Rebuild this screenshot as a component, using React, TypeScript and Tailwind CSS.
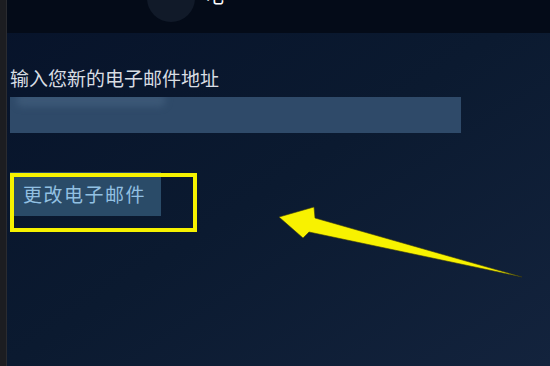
import React from "react";

const cjk = { fontFamily: '"Noto Sans CJK SC", "Noto Sans", sans-serif' };

function Arrow() {
  return (
    <svg
      className="absolute inset-0 pointer-events-none"
      width={550}
      height={366}
      viewBox="0 0 550 366"
    >
      <polygon
        points="279,217 314,207 315,218 522,277 309,232 303,238"
        fill="#f8f200"
        stroke="#3a3a10"
        strokeWidth={0.6}
        strokeLinejoin="round"
      />
    </svg>
  );
}

export default function App() {
  return (
    <div
      className="relative w-[550px] h-[366px] overflow-hidden flex bg-[#0a1629]"
      style={cjk}
    >
      {/* left window edge */}
      <div className="w-[7px] h-full bg-[#1c1d21] border-r border-[#2a2b30]" />

      <div className="flex-1 flex flex-col bg-linear-to-br from-[#07132a] via-[#0b1a30] to-[#13233d]">
        {/* top bar */}
        <div className="relative h-[33px] bg-[#040b18] overflow-hidden">
          <div className="absolute left-[140px] top-[-26px] w-[48px] h-[48px] rounded-full bg-[#111a29]" />
          <span className="absolute left-[198px] top-[-15px] text-[19px] leading-[19px] text-white">
            电
          </span>
        </div>

        <div className="flex flex-col pl-[3px]">
          <p className="mt-[34px] text-[19px] leading-[22px] text-[#d8dde3]">
            输入您新的电子邮件地址
          </p>

          <div className="relative mt-[8px] w-[451px] h-[36px] bg-[#2f4a69] overflow-hidden">
            <div className="absolute left-[6px] top-[-4px] w-[150px] h-[14px] rounded-full bg-[#3b5776] blur-[3px]" />
          </div>

          <button className="mt-[39px] w-[151px] h-[44px] bg-[#2a4b68] text-left pl-[13px] text-[19px] leading-[22px] tracking-[1.5px] text-[#92c0e2]">
            更改电子邮件
          </button>
        </div>
      </div>

      {/* annotation overlay */}
      <div className="absolute left-[10px] top-[173px] w-[187px] h-[59px] border-[4px] border-[#f6f200]" />
      <Arrow />
    </div>
  );
}
